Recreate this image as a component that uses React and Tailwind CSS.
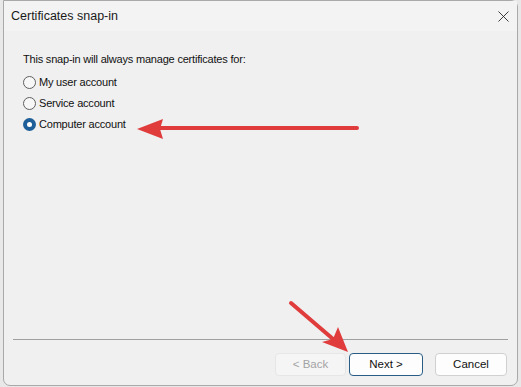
import { X } from 'lucide-react';

const options = [
  { id: 'user', label: 'My user account', checked: false },
  { id: 'service', label: 'Service account', checked: false },
  { id: 'computer', label: 'Computer account', checked: true },
];

const Radio = ({ checked }) =>
  checked ? (
    <span className="w-[13px] h-[13px] rounded-full bg-[#1f5f99] flex items-center justify-center">
      <span className="w-[5px] h-[5px] rounded-full bg-white" />
    </span>
  ) : (
    <span className="w-[13px] h-[13px] rounded-full border border-[#5f5f5f] bg-[#f7f7f7]" />
  );

const App = () => {
  return (
    <div
      className="relative w-[521px] h-[387px] overflow-hidden bg-[#e8e8e8] pl-[3px]"
      style={{ fontFamily: '"Liberation Sans", Arial, sans-serif' }}
    >
      <div className="w-[515px] h-[386px] flex flex-col bg-[#f0f0f0] border border-[#a9a9a9] rounded-b-[7px] rounded-tr-[7px]">
        {/* title bar */}
        <div className="h-[30px] flex items-center justify-between bg-[#f3f3f3] pl-[7px] pr-[4px]">
          <span className="text-[12.5px] text-[#1a1a1a]">Certificates snap-in</span>
          <X size={19} strokeWidth={1.1} className="text-[#222]" />
        </div>

        {/* body */}
        <div className="flex-1 flex flex-col pl-[19px] pt-[20px]">
          <p className="text-[11px] tracking-[-0.2px] text-[#111] leading-[16px]">
            This snap-in will always manage certificates for:
          </p>
          <div className="flex flex-col gap-[5px] mt-[7px]">
            {options.map((o) => (
              <label
                key={o.id}
                className="flex items-center gap-[3px] h-[16px] text-[11px] tracking-[-0.2px] text-[#111]"
              >
                <Radio checked={o.checked} />
                {o.label}
              </label>
            ))}
          </div>
        </div>

        {/* footer */}
        <div className="mx-[9px] border-t border-[#a0a0a0]" />
        <div className="h-[45px] flex items-start justify-end gap-[3px] pr-[10px] pt-[13px]">
          <button
            disabled
            className="w-[71px] h-[23px] rounded-[4px] bg-[#f5f5f5] border border-[#e6e6e6] text-[11.5px] text-[#a3a3a3]"
          >
            &lt; Back
          </button>
          <button className="w-[74px] h-[23px] rounded-[4px] bg-[#fdfdfd] border border-[#2a5d86] text-[11.5px] text-[#111]">
            Next &gt;
          </button>
          <button className="ml-[9px] w-[72px] h-[23px] rounded-[4px] bg-[#fdfdfd] border border-[#d0d0d0] text-[11.5px] text-[#111]">
            Cancel
          </button>
        </div>
      </div>

      {/* annotation arrows */}
      <svg className="absolute inset-0 pointer-events-none" width="521" height="387">
        <line x1="357" y1="128" x2="155" y2="128" stroke="#e03c3c" strokeWidth="4" strokeLinecap="round" />
        <polygon points="137,129 163,119 160,129 163,139" fill="#e03c3c" />
        <line x1="291" y1="303" x2="333" y2="339" stroke="#e03c3c" strokeWidth="4" strokeLinecap="round" />
        <polygon points="348,352 322,342 333,339 338,327" fill="#e03c3c" />
      </svg>
    </div>
  );
};

export default App;
